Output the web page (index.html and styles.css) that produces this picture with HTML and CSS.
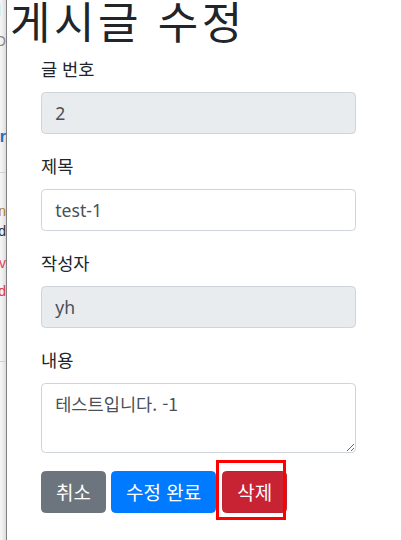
FILE: index.html
```html
<!DOCTYPE html>
<html lang="ko">
<head>
<meta charset="utf-8">
<title>게시글 수정</title>
<link rel="stylesheet" href="styles.css">
</head>
<body>
<div class="screen">
  <aside class="behind">
    <div class="frag f1"><span>ㅓ</span></div>
    <div class="frag f2"><span>O</span></div>
    <div class="frag f3"><span>r</span></div>
    <div class="rule r1"></div>
    <div class="frag f4"><span>n</span></div>
    <div class="frag f5"><span>d</span></div>
    <div class="frag f6"><span>v</span></div>
    <div class="frag f7"><span>d</span></div>
    <div class="rule r2"></div>
  </aside>
  <main class="win">
    <h1 class="title">게시글 수정</h1>
    <form class="form">
      <div class="group">
        <label class="label">글 번호</label>
        <input class="control" type="text" value="2" disabled>
      </div>
      <div class="group">
        <label class="label">제목</label>
        <input class="control" type="text" value="test-1">
      </div>
      <div class="group">
        <label class="label">작성자</label>
        <input class="control" type="text" value="yh" disabled>
      </div>
      <div class="group">
        <label class="label">내용</label>
        <textarea class="control area">테스트입니다. -1</textarea>
      </div>
      <div class="actions">
        <button type="button" class="btn btn-secondary">취소</button>
        <button type="button" class="btn btn-primary">수정 완료</button>
        <span class="marked">
          <button type="button" class="btn btn-danger">삭제</button>
          <span class="mark"></span>
        </span>
      </div>
    </form>
  </main>
</div>
</body>
</html>
```

FILE: styles.css
```css
* { box-sizing: border-box; }

html, body {
  margin: 0;
  padding: 0;
  background: #fff;
  height: 100%;
  overflow: hidden;
}

body {
  font-family: "Noto Sans", "Noto Sans CJK KR", sans-serif;
  color: #212529;
}

.screen {
  display: flex;
  height: 540px;
}

.behind {
  width: 7px;
  flex: none;
  display: flex;
  flex-direction: column;
  background: linear-gradient(to right, #f6f6f6 0, #f1f1f1 2px, #dcdcdc 6px);
  border-right: 1px solid #808080;
  overflow: hidden;
  font-family: "Liberation Sans", sans-serif;
}

.frag {
  display: flex;
  justify-content: flex-end;
  width: 6px;
  height: 14px;
  font-size: 14px;
  line-height: 14px;
  overflow: hidden;
  white-space: nowrap;
}
.frag span { flex: none; }

.f1 { margin-top: 3px; color: #a9dde0; }
.f2 { margin-top: 17px; color: #888; }
.f3 { margin-top: 82px; color: #1d6fc2; font-weight: bold; font-size: 16px; }
.r1 { margin-top: 28px; height: 1px; background: #d0d0d0; flex: none; }
.f4 { margin-top: 31px; color: #b07a1e; }
.f5 { margin-top: 6px; color: #333; }
.f6 { margin-top: 18px; color: #e0405a; }
.f7 { margin-top: 14px; color: #d83a3a; }
.r2 { margin-top: 63px; height: 1px; background: #d0d0d0; flex: none; }

.win {
  flex: 1;
  padding-left: 3px;
}

.title {
  margin: -6px 0 0 0;
  font-family: "Noto Sans CJK KR", sans-serif;
  font-size: 44px;
  font-weight: 400;
  letter-spacing: 3.5px;
  line-height: 52.8px;
  color: #212529;
  white-space: nowrap;
}

.form {
  width: 315px;
  margin-left: 31px;
  margin-top: 8px;
}

.group {
  display: flex;
  flex-direction: column;
  margin-bottom: 17.6px;
}

.label {
  font-family: "Noto Sans CJK KR", sans-serif;
  font-size: 17.6px;
  line-height: 28.6px;
  margin-bottom: 8.8px;
  color: #212529;
}

.control {
  display: block;
  width: 100%;
  height: 42px;
  padding: 6.6px 13.2px;
  font-family: "Noto Sans", "Noto Sans CJK KR", sans-serif;
  font-size: 17.6px;
  line-height: 26.4px;
  color: #495057;
  background: #fff;
  border: 1px solid #ced4da;
  border-radius: 4.4px;
  margin: 0;
}
.control:disabled {
  background: #e9ecef;
  color: #495057;
  opacity: 1;
}

.area {
  height: 70px;
  resize: vertical;
  font-family: "Noto Sans CJK KR", sans-serif;
}

.actions {
  display: flex;
  gap: 5px;
  align-items: flex-start;
}

.btn {
  height: 42px;
  padding: 6px 14px;
  font-family: "Noto Sans CJK KR", sans-serif;
  font-size: 19px;
  line-height: 28px;
  color: #fff;
  border: 1px solid transparent;
  border-radius: 4.4px;
  margin: 0;
  white-space: nowrap;
  cursor: pointer;
}
.btn-secondary { background: #6c757d; border-color: #6c757d; }
.btn-primary { background: #007bff; border-color: #007bff; }
.btn-danger { background: #c82333; border-color: #bd2130; }

.marked {
  position: relative;
  display: block;
  margin-left: 1px;
}
.marked .btn { display: block; }

.mark {
  position: absolute;
  left: -6px;
  top: -11px;
  width: 70px;
  height: 60px;
  border: 3px solid #ff0000;
  pointer-events: none;
}
```
